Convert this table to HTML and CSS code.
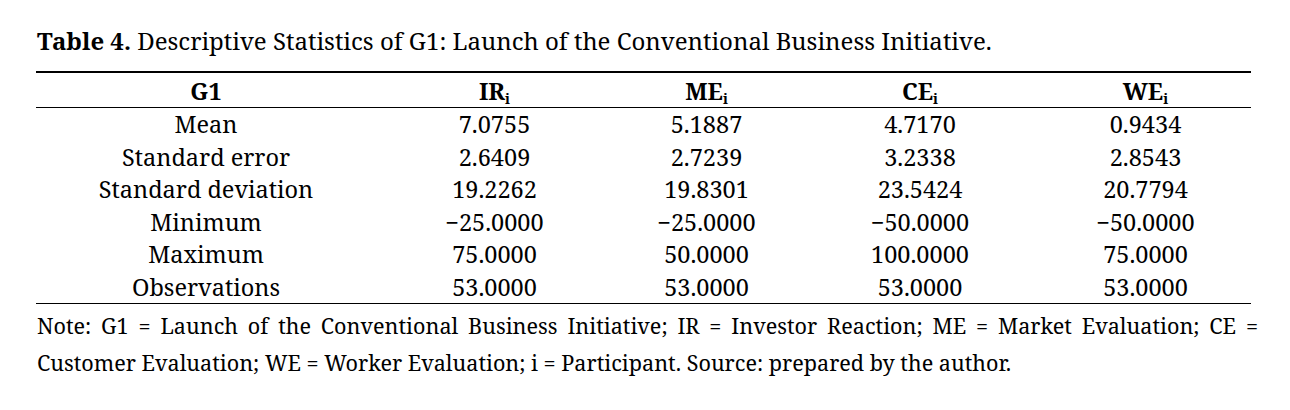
FILE: index.html
```html
<!DOCTYPE html>
<html lang="en">
<head>
<meta charset="utf-8">
<title>Table 4</title>
<link rel="stylesheet" href="styles.css">
</head>
<body>
<div class="page">
  <p class="caption"><b>Table 4.</b> Descriptive Statistics of G1: Launch of the Conventional Business Initiative.</p>
  <table class="stats">
    <colgroup>
      <col class="c1"><col class="c2"><col class="c3"><col class="c4"><col class="c5">
    </colgroup>
    <thead>
      <tr>
        <th>G1</th>
        <th>IR<sub>i</sub></th>
        <th>ME<sub>i</sub></th>
        <th>CE<sub>i</sub></th>
        <th>WE<sub>i</sub></th>
      </tr>
    </thead>
    <tbody>
      <tr><td>Mean</td><td>7.0755</td><td>5.1887</td><td>4.7170</td><td>0.9434</td></tr>
      <tr><td>Standard error</td><td>2.6409</td><td>2.7239</td><td>3.2338</td><td>2.8543</td></tr>
      <tr><td>Standard deviation</td><td>19.2262</td><td>19.8301</td><td>23.5424</td><td>20.7794</td></tr>
      <tr><td>Minimum</td><td>−25.0000</td><td>−25.0000</td><td>−50.0000</td><td>−50.0000</td></tr>
      <tr><td>Maximum</td><td>75.0000</td><td>50.0000</td><td>100.0000</td><td>75.0000</td></tr>
      <tr><td>Observations</td><td>53.0000</td><td>53.0000</td><td>53.0000</td><td>53.0000</td></tr>
    </tbody>
  </table>
  <div class="note">
    <p class="note-line justified">Note: G1 = Launch of the Conventional Business Initiative; IR = Investor Reaction; ME = Market Evaluation; CE =</p>
    <p class="note-line">Customer Evaluation; WE = Worker Evaluation; i = Participant. Source: prepared by the author.</p>
  </div>
</div>
</body>
</html>
```
FILE: styles.css
```css
html, body {
  margin: 0;
  padding: 0;
  background: #ffffff;
}
body {
  font-family: "Noto Serif", "DejaVu Serif", "Liberation Serif", serif;
  color: #000000;
}
.page {
  padding: 24px 0 0 36px;
  width: 1222px;
}
.caption {
  margin: 0 0 13px 1px;
  font-size: 24px;
  line-height: 34px;
  white-space: nowrap;
}
.caption b {
  font-weight: 700;
}
.stats {
  width: 1215px;
  border-collapse: collapse;
  table-layout: fixed;
  border-top: 2.5px solid #000;
  border-bottom: 1.7px solid #000;
  font-size: 23.5px;
}
.c1 { width: 340px; }
.c2 { width: 237px; }
.c3 { width: 187px; }
.c4 { width: 240px; }
.c5 { width: 211px; }
.stats th,
.stats td {
  padding: 0;
  text-align: center;
  white-space: nowrap;
}
.stats th {
  height: 32px;
  padding-top: 2px;
  font-weight: 700;
  border-bottom: 1.6px solid #000;
  line-height: 32px;
}
.stats td {
  height: 32.55px;
  line-height: 32.55px;
}
.stats sub {
  font-size: 0.6em;
  line-height: 0;
  vertical-align: -0.3em;
}
.note {
  margin: 4px 0 0 1px;
  width: 1221px;
  font-size: 21.6px;
}
.note-line {
  margin: 0;
  line-height: 36.4px;
  white-space: nowrap;
}
.justified {
  white-space: normal;
  text-align: justify;
  text-align-last: justify;
}
```
